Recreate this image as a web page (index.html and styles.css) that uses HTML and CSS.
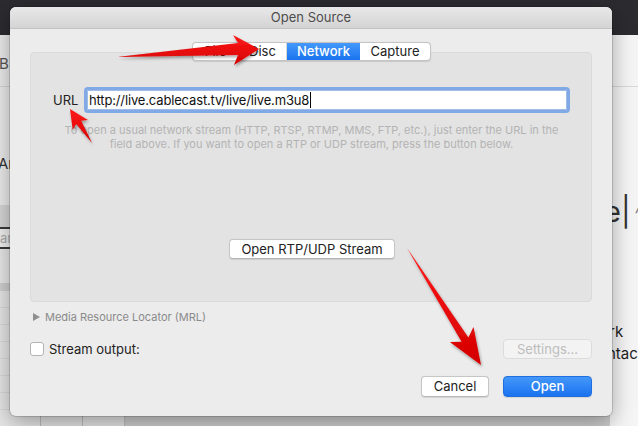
FILE: index.html
```html
<!DOCTYPE html>
<html>
<head>
<meta charset="utf-8">
<link rel="stylesheet" href="styles.css">
</head>
<body>
<div class="screen">
  <div class="topbar"></div>
  <div class="app">
    <div class="left">
      <div class="l-head"><span class="l-b">B</span></div>
      <div class="l-body"><span class="l-ar">Ar</span></div>
      <div class="l-band"></div>
      <div class="l-search">ar</div>
      <div class="l-gap"></div>
      <div class="l-dark"></div>
      <div class="l-rows"></div>
    </div>
    <div class="mid">
      <div class="mid-foot">
        <div class="mf c1"></div><div class="mf c2"></div><div class="mf c3"></div><div class="mf c4"></div>
      </div>
    </div>
    <div class="right">
      <div class="r-head"></div>
      <div class="r-big">e|<span class="r-caret">^</span></div>
      <div class="r-t1">rk</div>
      <div class="r-t2">ntac</div>
    </div>
  </div>
</div>

<div class="dialog">
  <div class="titlebar">Open Source</div>
  <div class="dbody">
    <div class="tabs">
      <div class="seg s-file">File</div>
      <div class="seg s-disc">Disc</div>
      <div class="seg s-net active">Network</div>
      <div class="seg s-cap">Capture</div>
    </div>
    <div class="panel">
      <div class="url-row">
        <span class="url-label">URL</span>
        <div class="url-input"><span class="url-text">http://live.cablecast.tv/live/live.m3u8</span><span class="caret"></span></div>
      </div>
      <p class="help">To open a usual network stream (HTTP, RTSP, RTMP, MMS, FTP, etc.), just enter the URL in the<br>field above. If you want to open a RTP or UDP stream, press the button below.</p>
      <div class="rtp-row"><div class="btn rtp">Open RTP/UDP Stream</div></div>
    </div>
    <div class="mrl"><span class="tri"></span>Media Resource Locator (MRL)</div>
    <div class="stream-row">
      <span class="check"></span><span class="stream-label">Stream output:</span>
      <div class="btn settings">Settings...</div>
    </div>
    <div class="actions">
      <div class="btn cancel">Cancel</div>
      <div class="btn open">Open</div>
    </div>
  </div>
</div>

<svg class="arrows" width="638" height="426" viewBox="0 0 638 426">
  <defs>
    <linearGradient id="rg" x1="0" y1="0" x2="0" y2="1">
      <stop offset="0" stop-color="#ff1a1a"/>
      <stop offset="1" stop-color="#d40000"/>
    </linearGradient>
    <filter id="sh" x="-20%" y="-20%" width="140%" height="140%">
      <feDropShadow dx="1" dy="2" stdDeviation="1.5" flood-color="#000" flood-opacity="0.35"/>
    </filter>
  </defs>
  <g fill="url(#rg)" filter="url(#sh)">
    <polygon points="117,57 238,43 233,35 259,49 234,65 238,55"/>
    <polygon points="92,143 81.2,120.8 87.9,120 70,109 72.7,129.8 76.2,124"/>
    <polygon points="407,248 468.4,337.5 473.5,327.1 481,365 449.9,342.1 461.6,341.7"/>
  </g>
</svg>
</body>
</html>
```

FILE: styles.css
```css
* { box-sizing: border-box; }
body {
  margin: 0;
  width: 638px;
  height: 426px;
  overflow: hidden;
  position: relative;
  background: #ececec;
  font-family: Inter, "Noto Sans", sans-serif;
  color: #222;
}
.screen { display: flex; flex-direction: column; height: 426px; }
.topbar { height: 35px; flex: none; background: #2c2b30; }
.app { flex: 1; display: flex; }

.left { width: 40px; background: #ebebeb; display: flex; flex-direction: column; overflow: hidden; white-space: nowrap; }
.l-head { height: 52px; border-bottom: 1px solid #d4d4d4; padding-top: 18px; flex: none; }
.l-b { font-size: 15px; color: #555; margin-left: -1px; }
.l-body { height: 118px; padding-top: 66px; flex: none; }
.l-ar { font-size: 15px; color: #333; margin-left: -2px; }
.l-band { height: 22px; background: #d6d6d6; flex: none; }
.l-search { height: 22px; flex: none; border-top: 2px solid #3a3a3a; border-bottom: 2px solid #3a3a3a; background: #efefef; color: #aaa; font-size: 13px; line-height: 18px; padding-left: 0; }
.l-gap { height: 34px; background: #e8e8e8; flex: none; }
.l-dark { height: 8px; background: #cfcfcf; flex: none; }
.l-rows { flex: 1; background: repeating-linear-gradient(#e6e6e6 0 16px, #d9d9d9 16px 17px); }

.mid { flex: 1; background: #d9d9d9; display: flex; flex-direction: column; justify-content: flex-end; }
.mid-foot { height: 12px; display: flex; }
.mf { height: 100%; }
.c1 { width: 0; }
.c2 { width: 42px; background: #e2e2e2; border-left: 1px solid #bcbcbc; }
.c3 { width: 43px; background: #e4e4e4; border-left: 1px solid #bcbcbc; border-right: 1px solid #bcbcbc; }
.c4 { flex: 1; background: #cdcdcd; }

.right { width: 28px; background: #f5f5f5; overflow: hidden; display: flex; flex-direction: column; white-space: nowrap; }
.r-head { height: 52px; border-bottom: 1px solid #d8d8d8; flex: none; }
.r-big { margin-top: 108px; margin-left: -6px; font-size: 29px; line-height: 34px; color: #333; font-weight: 400; }
.r-caret { font-size: 18px; color: #888; margin-left: 4px; vertical-align: middle; }
.r-t1 { margin-top: 91px; margin-left: -1px; font-size: 15px; line-height: 20px; color: #222; }
.r-t2 { margin-top: 2px; margin-left: -3px; font-size: 15px; line-height: 20px; color: #222; }

.dialog {
  position: absolute;
  left: 10px; top: 7px;
  width: 602px; height: 409px;
  background: #ececec;
  border-radius: 6px;
  box-shadow: 0 0 0 1px rgba(0,0,0,0.14), 0 6px 22px rgba(0,0,0,0.35);
  display: flex; flex-direction: column;
  overflow: hidden;
  z-index: 1;
}
.titlebar {
  height: 22px; flex: none;
  background: linear-gradient(#e9e8e9, #d5d4d5);
  border-bottom: 1px solid #c2c2c2;
  text-align: center;
  font-size: 13px; line-height: 21px;
  color: #4d4d4d;
}
.dbody { flex: 1; display: flex; flex-direction: column; padding: 13px 20px 19px; }

.tabs {
  align-self: center;
  display: flex;
  height: 19px;
  border: 1px solid #c4c4c4;
  border-radius: 4px;
  background: #fff;
  overflow: hidden;
  position: relative; z-index: 2;
  box-shadow: 0 0.5px 1px rgba(0,0,0,0.12);
  font-size: 13px; line-height: 17px;
  margin-left: 1px;
}
.seg { text-align: center; color: #222; border-right: 1px solid #d6d6d6; }
.seg:last-child { border-right: none; }
.s-file { width: 46px; }
.s-disc { width: 48px; }
.s-net { width: 73px; }
.s-cap { width: 70px; }
.seg.active { background: linear-gradient(#4499fa, #1a73ef); color: #fff; font-weight: 500; border-right: none; }

.panel {
  margin-top: -9px;
  height: 250px; flex: none;
  background: #e3e3e3;
  border: 1px solid #dadada;
  border-radius: 4px;
  padding: 34px 21px 0 22px;
  display: flex; flex-direction: column;
}
.url-row { display: flex; align-items: center; gap: 7px; }
.url-label { font-size: 13px; color: #222; width: 24px; }
.url-input {
  flex: 1; height: 26px;
  border: 3px solid #80a9e6;
  border-radius: 4px;
  background: #fff;
  box-shadow: inset 0 0 0 1px #9fbbe6;
  display: flex; align-items: center;
  padding-left: 2px;
  font-size: 13px; color: #111;
  letter-spacing: -0.15px;
}
.caret { width: 1px; height: 16px; background: #000; margin-left: 1px; }
.help {
  margin: 10px 0 0;
  text-align: center;
  font-size: 11px; line-height: 14px;
  color: #b3b3b3;
}
.rtp-row { margin-top: 88px; display: flex; justify-content: center; }
.btn {
  height: 20px;
  background: #fff;
  border: 1px solid #c6c6c6;
  border-bottom-color: #b6b6b6;
  border-radius: 4px;
  font-size: 13px; line-height: 18px;
  text-align: center;
  color: #222;
  box-shadow: 0 0.5px 1px rgba(0,0,0,0.1);
}
.rtp { width: 166px; margin-left: 1px; }

.mrl {
  margin-top: 8px; height: 14px;
  display: flex; align-items: center;
  font-size: 11px; color: #8a8a8a;
  padding-left: 3px;
}
.tri {
  width: 0; height: 0;
  border-top: 4px solid transparent;
  border-bottom: 4px solid transparent;
  border-left: 7px solid #8f8f8f;
  margin-right: 5px;
}
.stream-row { margin-top: 15px; height: 20px; display: flex; align-items: center; }
.check {
  width: 14px; height: 14px;
  background: #fff;
  border: 1px solid #b3b3b3;
  border-radius: 3px;
  margin-right: 5px;
}
.stream-label { font-size: 13px; color: #222; flex: 1; }
.settings { width: 89px; color: #bdbdbd; background: #f3f3f3; border-color: #dcdcdc; box-shadow: none; }

.actions { margin-top: 17px; display: flex; justify-content: flex-end; gap: 14px; }
.actions .btn { height: 21px; line-height: 19px; }
.cancel { width: 68px; }
.open { width: 89px; background: linear-gradient(#4498fa, #1a72ef); border-color: #1f6fe0; color: #fff; font-weight: 500; }

.arrows { position: absolute; left: 0; top: 0; pointer-events: none; z-index: 10; }
```
